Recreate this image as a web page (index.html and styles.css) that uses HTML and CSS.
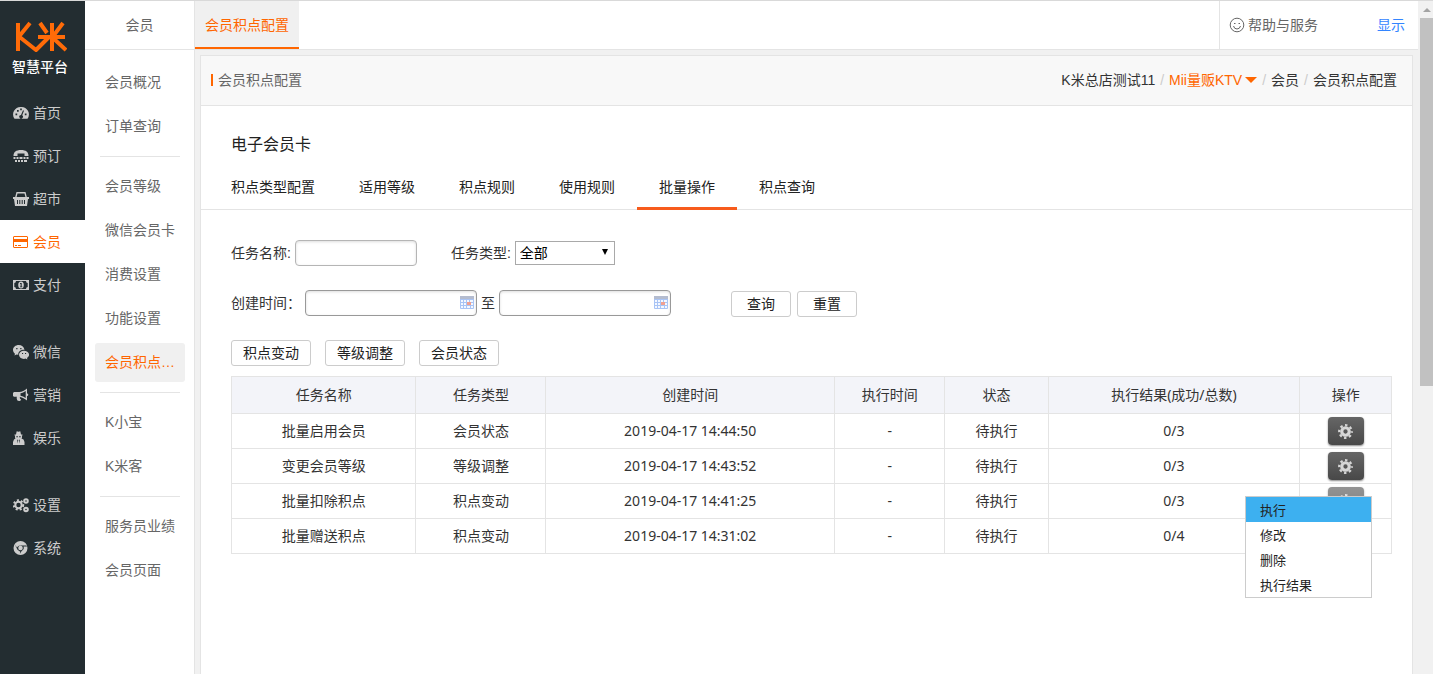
FILE: index.html
```html
<!DOCTYPE html>
<html lang="zh-CN">
<head>
<meta charset="utf-8">
<title>会员积点配置</title>
<link rel="stylesheet" href="styles.css">
</head>
<body>
<div class="app">
  <nav class="rail" aria-label="主导航">
    <div class="brand">
      <svg class="brand-mark" viewBox="0 0 54 32" role="img" aria-label="K米"><path d="M5 2v28M17 2L6 15.500L23 29L36 16M27 2l7 10M39 2v28M50 2L41 14M25 16h27M40 17l13 12"/></svg>
      <span class="brand-name">智慧平台</span>
    </div>
    <a class="rail-link" href="#"><svg viewBox="0 0 16 16"><path fill-rule="evenodd" d="M8 2a7.500 7.500 0 0 0-6.500 11.800h13A7.500 7.500 0 0 0 8 2zM2.500 8.500h1.700v1.700H2.500zM4 5h1.700v1.700H4zM7.200 3.500h1.600v1.700H7.200zM11.800 8.500h1.700v1.700h-1.700zM10 5.300l1 .4-1.800 4.600a1.800 1.800 0 1 1-1.200-.4z"/></svg>首页</a>
    <a class="rail-link" href="#"><svg viewBox="0 0 16 16"><path fill-rule="evenodd" d="M.5 8C.5 4 3 2 8 2s7.500 2 7.500 6h-4V5.500h-7V8zM.5 9h2v2h-2zm3 0h2v2h-2zm3 0h3v2h-3zm4 0h2v2h-2zm3 0h2v2h-2zM2 12h2v2H2zm3 0h2v2H5zm3 0h2v2H8zm3 0h3v2h-3z"/></svg>预订</a>
    <a class="rail-link" href="#"><svg viewBox="0 0 16 16"><path fill-rule="evenodd" d="M3.500 1h9l1.300 5H16v2h-1l-1 7H2L1 8H0V6h2.200zM4.500 2.500L3.600 6h8.800l-.9-3.500zM4 9v4h1V9zm2.300 0v4h1V9zm2.400 0v4h1V9zM11 9v4h1V9z"/></svg>超市</a>
    <a class="rail-link is-active" href="#"><svg viewBox="0 0 16 16"><path fill-rule="evenodd" d="M1 2h13l1 1v10l-1 1H1l-1-1V3zM1 3v2h13V3zm0 5v5h13V8zM2 11h2v1H2zm3 0h3v1H5z"/></svg>会员</a>
    <a class="rail-link" href="#"><svg viewBox="0 0 16 16"><path fill-rule="evenodd" d="M0 3h16v10H0zM3 4Q3 6 1.300 6v4Q3 10 3 12h10q0-2 1.700-2V6Q13 6 13 4zM8 4.500a2.800 3.500 0 1 1 0 7 2.800 3.500 0 1 1 0-7zM7 6v1h.6v2.500H7v.8h2.300v-.8h-.6V6z"/></svg>支付</a>
    <a class="rail-link rail-break" href="#"><svg viewBox="0 0 16 16"><path fill-rule="evenodd" d="M5.800 1C2.500 1 0 3.300 0 6c0 1.500.8 2.800 2 3.700l-.5 1.900 2-1.100 1.800.2C5 7.800 7.500 5.600 11.500 5.700 11 3 8.500 1 5.800 1zM3.200 4h1.300v1.300H3.200zm4 0h1.300v1.300H7.200zM11 6.700c-2.900 0-5 1.800-5 4.100s2.100 4.100 5 4.100l1.500-.3 1.900 1-.4-1.600c1.400-1 2.100-1.900 2.100-3.200 0-2.300-2.200-4.100-5.100-4.100zM9 9h1.100v1H9zm3 0h1.100v1H12z"/></svg>微信</a>
    <a class="rail-link" href="#"><svg viewBox="0 0 16 16"><path fill-rule="evenodd" d="M14 1.500v5a1.300 1.300 0 0 1 0 2.600v4.400c-2.500-2-4.500-3.300-7-3.600-.6 1 0 1.600 1.200 2.900-.8 1.500-2.800 1.500-3.800.8-.6-1.700-1-2.800-.5-3.800H1L0 9V6l1-1h5.200c3 0 5-1.400 7.800-3.500zM12.700 4C11 5.300 9.300 6 7.500 6.300v2.400c1.800.3 3.500 1.100 5.200 2.300z"/></svg>营销</a>
    <a class="rail-link" href="#"><svg viewBox="0 0 16 16"><path fill-rule="evenodd" d="M3 4.500L3.700 1.300 5.500 1.700 7.300 1.300 8 4.500h1.500v1H8.800C9.300 7 9 8 8.500 8.500l2 1L11.500 12v3H0v-3l1-2.500 1.500-1C2 8 1.800 7 2.200 5.500H1.500v-1zM3.300 6.300v.9h1.600v-.9zm2.800 0v.9h1.600v-.9zM4.200 9.500l.3 4 .7-3.500zm2.600 0L5.800 10l.7 3.500z"/></svg>娱乐</a>
    <a class="rail-link rail-break" href="#"><svg viewBox="0 0 16 16"><circle class="cog" cx="5.500" cy="8" r="3.200"/><circle class="cog-teeth" cx="5.500" cy="8" r="4.700"/><circle class="cog small" cx="13" cy="4" r="1.800"/><circle class="cog small" cx="13" cy="12.500" r="1.800"/></svg>设置</a>
    <a class="rail-link" href="#"><svg viewBox="0 0 16 16"><path fill-rule="evenodd" d="M7.500 1a7 7 0 1 0 0 14 7 7 0 1 0 0-14zM1.800 4.500l2.700 5.200 2.800 2L6.800 14l2-3.200a3.500 3.500 0 0 0 1.700-4.300H14l-.5-1H7.500A3.500 3.500 0 0 0 4 7.600zM7.500 5.700a2.300 2.300 0 1 1 0 4.600 2.300 2.300 0 1 1 0-4.600z"/></svg>系统</a>
  </nav>

  <aside class="side">
    <h2 class="side-title">会员</h2>
    <ul class="side-group">
      <li><a href="#">会员概况</a></li>
      <li><a href="#">订单查询</a></li>
    </ul>
    <ul class="side-group">
      <li><a href="#">会员等级</a></li>
      <li><a href="#">微信会员卡</a></li>
      <li><a href="#">消费设置</a></li>
      <li><a href="#">功能设置</a></li>
      <li><a class="is-current" href="#">会员积点…</a></li>
    </ul>
    <ul class="side-group">
      <li><a href="#">K小宝</a></li>
      <li><a href="#">K米客</a></li>
    </ul>
    <ul class="side-group">
      <li><a href="#">服务员业绩</a></li>
      <li><a href="#">会员页面</a></li>
    </ul>
  </aside>

  <div class="main">
    <header class="topbar">
      <a class="page-tab" href="#">会员积点配置</a>
      <div class="tools">
        <a class="help" href="#"><svg viewBox="0 0 16 16"><circle cx="8" cy="8" r="6.800"/><path d="M4.500 9q.7 3 3.500 3t3.500-3M5 6.500h1.500M9.500 6.500H11"/></svg>帮助与服务</a>
        <a class="show" href="#">显示</a>
      </div>
    </header>

    <section class="card">
      <div class="card-head">
        <h1>会员积点配置</h1>
        <div class="crumbs">
          <span>K米总店测试11</span><i>/</i><a class="shop" href="#">Mii量贩KTV</a><i>/</i><span>会员</span><i>/</i><span>会员积点配置</span>
        </div>
      </div>

      <h3 class="card-title">电子会员卡</h3>
      <nav class="tabs" aria-label="电子会员卡">
        <a href="#">积点类型配置</a>
        <a href="#">适用等级</a>
        <a href="#">积点规则</a>
        <a href="#">使用规则</a>
        <a class="is-on" href="#">批量操作</a>
        <a href="#">积点查询</a>
      </nav>

      <div class="content">
        <form class="filters">
          <div class="row">
            <label for="task-name">任务名称:</label>
            <input class="field" id="task-name" type="text">
            <label class="type-label" for="task-type">任务类型:</label>
            <span class="picker"><select id="task-type"><option>全部</option></select></span>
          </div>
          <div class="row">
            <label class="date-label" for="date-from">创建时间：</label>
            <span class="date"><input class="field" id="date-from" type="text"><svg viewBox="0 0 14 13"><use href="#calendar"/></svg></span>
            <label class="to" for="date-to">至</label>
            <span class="date"><input class="field" id="date-to" type="text"><svg viewBox="0 0 14 13"><use href="#calendar"/></svg></span>
            <div class="form-actions">
              <button class="btn" type="button">查询</button>
              <button class="btn" type="reset">重置</button>
            </div>
          </div>
        </form>

        <div class="batch">
          <button class="btn" type="button">积点变动</button>
          <button class="btn" type="button">等级调整</button>
          <button class="btn" type="button">会员状态</button>
        </div>

        <table class="tasks">
          <colgroup><col class="c-name"><col class="c-type"><col class="c-made"><col class="c-run"><col class="c-state"><col class="c-result"><col class="c-act"></colgroup>
          <thead>
            <tr><th>任务名称</th><th>任务类型</th><th>创建时间</th><th>执行时间</th><th>状态</th><th>执行结果(成功/总数)</th><th>操作</th></tr>
          </thead>
          <tbody>
            <tr><td>批量启用会员</td><td>会员状态</td><td>2019-04-17 14:44:50</td><td>-</td><td>待执行</td><td>0/3</td>
              <td><button class="gear" type="button" aria-label="操作"><svg viewBox="0 0 16 16"><use href="#gear"/></svg></button></td></tr>
            <tr><td>变更会员等级</td><td>等级调整</td><td>2019-04-17 14:43:52</td><td>-</td><td>待执行</td><td>0/3</td>
              <td><button class="gear" type="button" aria-label="操作"><svg viewBox="0 0 16 16"><use href="#gear"/></svg></button></td></tr>
            <tr><td>批量扣除积点</td><td>积点变动</td><td>2019-04-17 14:41:25</td><td>-</td><td>待执行</td><td>0/3</td>
              <td><div class="menu-anchor"><button class="gear is-open" type="button" aria-label="操作"><svg viewBox="0 0 16 16"><use href="#gear"/></svg></button>
                <ul class="menu">
                  <li><button class="is-hover" type="button">执行</button></li>
                  <li><button type="button">修改</button></li>
                  <li><button type="button">删除</button></li>
                  <li><button type="button">执行结果</button></li>
                </ul></div></td></tr>
            <tr><td>批量赠送积点</td><td>积点变动</td><td>2019-04-17 14:31:02</td><td>-</td><td>待执行</td><td>0/4</td>
              <td><button class="gear" type="button" aria-label="操作"><svg viewBox="0 0 16 16"><use href="#gear"/></svg></button></td></tr>
          </tbody>
        </table>
      </div>
    </section>
  </div>

  <div class="scrollbar" aria-hidden="true"><span class="scroll-up"></span><span class="scroll-thumb"></span></div>
</div>

<svg class="defs" aria-hidden="true">
  <defs>
    <g id="gear"><circle cx="8" cy="8" r="4" fill="none" stroke="#d6d6d6" stroke-width="3.400"/><circle cx="8" cy="8" r="6.700" fill="none" stroke="#d6d6d6" stroke-width="2.400" stroke-dasharray="2.630 2.630" stroke-dashoffset="1.315"/></g>
    <g id="calendar"><rect width="14" height="13" rx="1" fill="#a9c4f5"/><path d="M0 0h14v3H0z" fill="#b4bccf"/><path d="M1 4h2v2H1zm3 0h2v2H4zm3 0h2v2H7zm3 0h3v2h-3zM1 7h2v2H1zm3 0h2v2H4zm7 0h2v2h-2zM1 10h2v2H1zm3 0h2v2H4zm3 0h3v2H7zm4 0h2v2h-2z" fill="#f4f8ff"/><path d="M7 6h4v3H7z" fill="#f0a090"/></g>
  </defs>
</svg>
</body>
</html>
```

FILE: styles.css
```css
* { box-sizing: border-box; }

body {
  margin: 0;
  font: 14px/20px "Liberation Sans", "Noto Sans CJK SC", sans-serif;
  color: #333;
}

a { color: inherit; text-decoration: none; }
ul { list-style: none; margin: 0; padding: 0; }
h1, h2, h3 { margin: 0; font-weight: 400; font-size: 14px; }
button, input, select { font: inherit; color: inherit; }
.defs { display: none; }

.app {
  display: grid;
  grid-template-columns: 85px 110px 1fr 15px;
  min-height: 100vh;
  border-top: 1px solid #d9d9d9;
  background: #f1f1f1;
}

/* Primary rail */
.rail { background: #232d31; color: #ccc; }
.brand {
  height: 90px;
  padding: 20px 5px 0 0;
  display: flex;
  flex-direction: column;
  align-items: center;
  gap: 6px;
}
.brand-mark { width: 54px; height: 32px; fill: none; stroke: #ff6b08; stroke-width: 4; stroke-linejoin: round; }
.brand-name { color: #fff; font-weight: 500; line-height: 16px; }
.rail-link {
  height: 43px;
  padding-left: 13px;
  display: flex;
  align-items: center;
  gap: 4px;
}
.rail-link svg { width: 16px; height: 16px; fill: currentColor; }
.rail-link .cog { fill: none; stroke: currentColor; stroke-width: 2; }
.rail-link .cog-teeth { fill: none; stroke: currentColor; stroke-width: 2; stroke-dasharray: 2 2; }
.rail-link.is-active { background: #fff; color: #ff6600; }
.rail-break { margin-top: 24px; }

/* Section menu */
.side { background: #fff; border-right: 1px solid #e4e4e4; color: #666; }
.side-title {
  height: 49px;
  line-height: 48px;
  text-align: center;
  border-bottom: 1px solid #e4e4e4;
  margin-bottom: 13px;
}
.side-group {
  display: grid;
  gap: 5px;
  margin: 0 9px 0 10px;
}
.side-group + .side-group::before {
  content: "";
  height: 1px;
  margin: 10px 5px 5px;
  background: #e4e4e4;
}
.side-group a { display: block; line-height: 39px; padding-left: 10px; white-space: nowrap; border-radius: 3px; }
.side-group .is-current { background: #f0f0f0; color: #ff6600; }

/* Main column */
.main { display: flex; flex-direction: column; min-width: 0; }
.topbar {
  height: 49px;
  display: flex;
  justify-content: space-between;
  background: #fff;
  border-bottom: 1px solid #e4e4e4;
}
.page-tab {
  padding: 0 10px;
  line-height: 48px;
  color: #ff6600;
  background: #f0f0f0;
  border-bottom: 2px solid #ff6600;
}
.tools {
  width: 199px;
  padding: 0 13px 0 9px;
  display: flex;
  align-items: center;
  justify-content: space-between;
  border-left: 1px solid #e4e4e4;
  color: #666;
}
.help { display: flex; align-items: center; gap: 3px; }
.help svg { width: 16px; height: 16px; fill: none; stroke: #666; }
.show { color: #3385ff; }

.card {
  flex: 1;
  margin: 5px 5px 0;
  background: #fff;
  border: 1px solid #e4e4e4;
  border-bottom: 0;
}
.card-head {
  height: 50px;
  padding: 0 15px 2px 10px;
  display: flex;
  align-items: center;
  justify-content: space-between;
  background: #f8f8f8;
  border-bottom: 1px solid #e4e4e4;
}
.card-head h1 { display: flex; align-items: center; gap: 5px; color: #666; }
.card-head h1::before { content: ""; width: 2px; height: 12px; background: #ff6600; }
.crumbs { display: flex; }
.crumbs i { padding: 0 5px; font-style: normal; color: #ccc; }
.shop { display: flex; align-items: center; gap: 3px; color: #ff6600; }
.shop::after { content: ""; border: 6px solid transparent; border-top-color: #ff6600; border-bottom: 0; }

.card-title { padding: 29px 30px 0; font-size: 16px; color: #222; }
.tabs {
  display: flex;
  padding: 22px 8px 0;
  border-bottom: 1px solid #e4e4e4;
  color: #222;
}
.tabs a { height: 33px; padding: 0 22px; margin-bottom: -1px; }
.tabs .is-on { border-bottom: 3px solid #f75b1c; }

.content { padding: 30px 20px 0 30px; }

/* Filters */
.row { display: flex; align-items: center; height: 26px; margin-bottom: 24px; }
.field {
  width: 122px;
  height: 26px;
  border: 1px solid #b5b5b5;
  border-radius: 4px;
  box-shadow: inset 0 1px 3px #ddd;
  background: #fff;
}
.row label + .field, .row label + .picker { margin-left: 4px; }
.row .type-label { margin-left: 34px; }
.picker { position: relative; height: 24px; }
.picker select {
  display: block;
  width: 100px;
  height: 24px;
  padding: 0 4px;
  appearance: none;
  color: #000;
  background: #fff;
  border: 1px solid #a9a9a9;
  border-radius: 0;
}
.picker::after {
  content: "";
  position: absolute;
  right: 7px;
  top: 8px;
  border: 3px solid transparent;
  border-top: 6px solid #000;
  border-bottom: 0;
}
.date-label { width: 74px; white-space: nowrap; }
.date { position: relative; }
.date .field { display: block; width: 172px; padding-right: 24px; border-color: #999; }
.date svg { position: absolute; right: 3px; top: 6px; width: 14px; height: 13px; }
.row .to { width: 22px; text-align: center; }
.form-actions { display: flex; gap: 6px; margin-left: 60px; padding-top: 2px; }
.btn {
  min-width: 60px;
  height: 26px;
  padding: 0 11px;
  line-height: 24px;
  border: 1px solid #ccc;
  border-radius: 3px;
  background: #fff;
  color: #222;
}
.batch { display: flex; gap: 14px; margin-bottom: 10px; }

/* Task table */
.tasks { width: 100%; table-layout: fixed; border-collapse: collapse; text-align: center; }
.c-name { width: 15.9%; }
.c-type { width: 11.2%; }
.c-made { width: 24.9%; }
.c-run { width: 9.5%; }
.c-state { width: 8.9%; }
.c-result { width: 21.7%; }
.c-act { width: 7.9%; }
.tasks th, .tasks td { height: 35px; padding: 0; border: 1px solid #e4e4e4; font-weight: 400; }
.tasks th { height: 37px; background: #f3f4f9; font-family: "Noto Sans", "Noto Sans CJK SC", sans-serif; }
.tasks td { font-family: "Noto Sans", "Noto Sans CJK SC", sans-serif; }
.gear {
  display: block;
  width: 36px;
  height: 28px;
  margin: 0 auto;
  padding: 0;
  border: 0;
  border-radius: 4px;
  background: linear-gradient(#666, #484848);
  box-shadow: 0 1px 2px #888;
}
.gear svg { display: block; width: 15px; height: 15px; margin: 0 auto; }
.gear.is-open { opacity: 0.7; }
.menu-anchor { position: relative; height: 28px; }
.menu {
  position: absolute;
  z-index: 1;
  right: 19px;
  top: 9px;
  width: 127px;
  border: 1px solid #ccc;
  background: #fff;
}
.menu button {
  display: block;
  width: 100%;
  height: 25px;
  padding: 0 14px;
  border: 0;
  background: none;
  font-size: 13px;
  text-align: left;
  color: #222;
}
.menu .is-hover { background: #3db0f0; }

/* Scroll track */
.scrollbar { display: flex; flex-direction: column; background: #f1f1f1; padding-left: 2px; }
.scroll-up { height: 17px; display: grid; place-items: center; }
.scroll-up::before { content: ""; border: 4px solid transparent; border-bottom-color: #a3a3a3; border-top: 0; }
.scroll-thumb { height: 368px; background: #c1c1c1; }
```
